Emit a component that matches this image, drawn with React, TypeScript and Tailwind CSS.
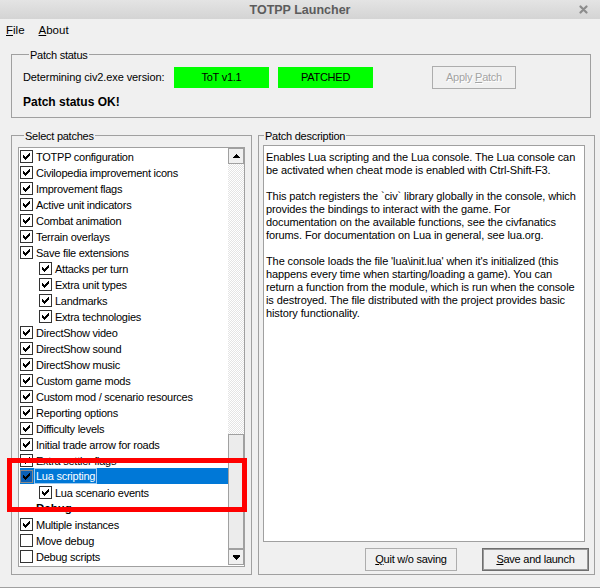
import React from "react";

const Check = () => (
  <svg width="7" height="7" viewBox="0 0 7 7" shapeRendering="crispEdges">
    <path
      d="M6 0h1v1h-1z M5 1h2v1h-2z M0 2h1v1h-1z M4 2h3v1h-3z M0 3h2v1h-2z M3 3h3v1h-3z M0 4h5v1h-5z M1 5h3v1h-3z M2 6h1v1h-1z"
      fill="#000"
    />
  </svg>
);

const Box = ({ checked, selected }: { checked: boolean; selected?: boolean }) => (
  <div
    className={
      selected
        ? "w-[13px] h-[13px] shrink-0 border border-[#8a8a8a] bg-[#0a5fb4] flex items-center justify-center"
        : "w-[13px] h-[13px] shrink-0 border border-[#333333] bg-white flex items-center justify-center"
    }
  >
    {checked ? <Check /> : null}
  </div>
);

type Row = { label: string; level: number; checked: boolean; bold?: boolean; selected?: boolean };

const rows: Row[] = [
  { label: "TOTPP configuration", level: 0, checked: true },
  { label: "Civilopedia improvement icons", level: 0, checked: true },
  { label: "Improvement flags", level: 0, checked: true },
  { label: "Active unit indicators", level: 0, checked: true },
  { label: "Combat animation", level: 0, checked: true },
  { label: "Terrain overlays", level: 0, checked: true },
  { label: "Save file extensions", level: 0, checked: true },
  { label: "Attacks per turn", level: 1, checked: true },
  { label: "Extra unit types", level: 1, checked: true },
  { label: "Landmarks", level: 1, checked: true },
  { label: "Extra technologies", level: 1, checked: true },
  { label: "DirectShow video", level: 0, checked: true },
  { label: "DirectShow sound", level: 0, checked: true },
  { label: "DirectShow music", level: 0, checked: true },
  { label: "Custom game mods", level: 0, checked: true },
  { label: "Custom mod / scenario resources", level: 0, checked: true },
  { label: "Reporting options", level: 0, checked: true },
  { label: "Difficulty levels", level: 0, checked: true },
  { label: "Initial trade arrow for roads", level: 0, checked: true },
  { label: "Extra settler flags", level: 0, checked: true },
  { label: "Lua scripting", level: 0, checked: true, selected: true },
  { label: "Lua scenario events", level: 1, checked: true },
  { label: "Debug", level: 0, checked: false, bold: true },
  { label: "Multiple instances", level: 0, checked: true },
  { label: "Move debug", level: 0, checked: false },
  { label: "Debug scripts", level: 0, checked: false },
];

const desc = [
  "Enables Lua scripting and the Lua console. The Lua console can",
  "be activated when cheat mode is enabled with Ctrl-Shift-F3.",
  "",
  "This patch registers the `civ` library globally in the console, which",
  "provides the bindings to interact with the game. For",
  "documentation on the available functions, see the civfanatics",
  "forums. For documentation on Lua in general, see lua.org.",
  "",
  "The console loads the file 'lua\\init.lua' when it's initialized (this",
  "happens every time when starting/loading a game). You can",
  "return a function from the module, which is run when the console",
  "is destroyed. The file distributed with the project provides basic",
  "history functionality.",
];

function ListRow({ r }: { r: Row }) {
  if (r.bold) {
    return (
      <div className="h-[16px] flex items-center pl-[16px] font-bold tracking-normal text-[11.5px]">
        <span className="mt-[2px]">{r.label}</span>
      </div>
    );
  }
  if (r.selected) {
    return (
      <div className="h-[16px] flex items-center bg-[#0078d7] text-white">
        <Box checked={r.checked} selected />
        <span className="ml-[1px] px-[1px] leading-[13px] pt-[1px] border border-[#9ecbf2]">{r.label}</span>
      </div>
    );
  }
  return (
    <div className={"h-[16px] flex items-center " + (r.level === 1 ? "pl-[19px]" : "")}>
      <Box checked={r.checked} />
      <span className="ml-[3px] mt-[2px] whitespace-nowrap">{r.label}</span>
    </div>
  );
}

export default function App() {
  return (
    <div className="relative w-[600px] h-[588px] bg-[#f0f0f0] border-b border-[#a0a0a0] flex flex-col text-black text-[11px] tracking-[-0.25px] font-['Liberation_Sans',Arial,sans-serif] overflow-hidden">
      {/* Title bar */}
      <div className="relative h-[19px] shrink-0 bg-linear-to-b from-[#e4e4e4] to-[#d4d4d4] flex items-center justify-center">
        <span className="mt-[2px] text-[12.5px] font-bold text-[#5c5c5c] tracking-normal">TOTPP Launcher</span>
        <svg className="absolute right-[12px] top-[5px]" width="9" height="9" viewBox="0 0 9 9">
          <path d="M1.5 1.5 L7.5 7.5 M7.5 1.5 L1.5 7.5" stroke="#8c8c8c" strokeWidth="2.2" strokeLinecap="round" />
        </svg>
      </div>

      {/* Menu */}
      <div className="h-[23px] shrink-0 flex items-center pl-[6px] gap-[14px] text-[11.5px] tracking-normal">
        <span>
          <span className="underline">F</span>ile
        </span>
        <span>
          <span className="underline">A</span>bout
        </span>
      </div>

      {/* Patch status */}
      <fieldset className="ml-[11px] mt-[5px] w-[580px] border border-[#a0a0a0] pl-[11px] pt-[4px] pb-[8px]">
        <legend className="ml-[6px] px-[1px] pt-[2px] leading-[13px]">Patch status</legend>
        <div className="flex items-center h-[23px]">
          <div className="w-[151px] tracking-[-0.1px]">Determining civ2.exe version:</div>
          <div className="w-[95px] h-[21px] bg-[#00ff00] flex items-center justify-center">ToT v1.1</div>
          <div className="ml-[9px] w-[95px] h-[21px] bg-[#00ff00] flex items-center justify-center">PATCHED</div>
          <div className="ml-[59px] w-[84px] h-[23px] border border-[#adadad] bg-[#f0f0f0] flex items-center justify-center text-[#a3a3a3] [text-shadow:1px_1px_0_#ffffff]">
            <span>
              Apply <span className="underline">P</span>atch
            </span>
          </div>
        </div>
        <div className="mt-[6px] leading-[14px] text-[12px] font-bold tracking-normal">Patch status OK!</div>
      </fieldset>

      {/* Lower section */}
      <div className="flex mt-[10px]">
        <fieldset className="ml-[11px] w-[241px] border border-[#a0a0a0] px-[6px] pt-[4px] pb-[7px]">
          <legend className="ml-[6px] px-[1px] pt-[2px] leading-[13px]">Select patches</legend>
          <div className="h-[420px] border border-[#a0a0a0] bg-white flex">
            <div className="flex-1 pl-[1px] pt-0">
              {rows.map((r, i) => (
                <ListRow key={i} r={r} />
              ))}
            </div>
            <div className="w-[16px] flex flex-col">
              <div className="h-[16px] border border-[#a0a0a0] bg-[#f0f0f0] flex items-center justify-center">
                <svg width="7" height="4" viewBox="0 0 7 4" shapeRendering="crispEdges">
                  <path d="M3 0h1v1h-1z M2 1h3v1h-3z M1 2h5v1h-5z M0 3h7v1h-7z" fill="#000" />
                </svg>
              </div>
              <div className="h-[270px] [background-image:repeating-conic-gradient(#e4e4e4_0_25%,#ffffff_0_50%)] [background-size:2px_2px]" />
              <div className="h-[115px] border border-[#a0a0a0] bg-[#ececec]" />
              <div className="h-[16px] border border-[#a0a0a0] bg-[#f0f0f0] flex items-center justify-center">
                <svg width="7" height="5" viewBox="0 0 7 5" shapeRendering="crispEdges">
                  <path d="M0 0h7v1h-7z M0 1h7v1h-7z M1 2h5v1h-5z M2 3h3v1h-3z M3 4h1v1h-1z" fill="#000" />
                </svg>
              </div>
            </div>
          </div>
        </fieldset>

        <fieldset className="ml-[6px] w-[337px] border border-[#a0a0a0] pt-[2px] pb-[3px]">
          <legend className="ml-[5px] px-[1px] pt-[2px] leading-[13px]">Patch description</legend>
          <div className="ml-[4px] w-[322px] h-[397px] border border-[#a0a0a0] bg-white pl-[2px] pt-[5px] leading-[13px] tracking-[-0.1px]">
            {desc.map((l, i) => (
              <div key={i} className="h-[13px] whitespace-nowrap">
                {l}
              </div>
            ))}
          </div>
          <div className="flex mt-[6px]">
            <div className="ml-[106px] w-[92px] h-[23px] border border-[#adadad] bg-[#f0f0f0] flex items-center justify-center">
              <span>
                <span className="underline">Q</span>uit w/o saving
              </span>
            </div>
            <div className="ml-[25px] w-[107px] h-[23px] border border-[#6e6e6e] shadow-[inset_0_0_0_1px_#9a9a9a] bg-[#f0f0f0] flex items-center justify-center">
              <span>
                <span className="underline">S</span>ave and launch
              </span>
            </div>
          </div>
        </fieldset>
      </div>

      {/* Annotation overlay */}
      <div className="absolute left-[7px] top-[458px] w-[240px] h-[54px] border-[5px] border-[#ff0000] pointer-events-none" />
    </div>
  );
}
